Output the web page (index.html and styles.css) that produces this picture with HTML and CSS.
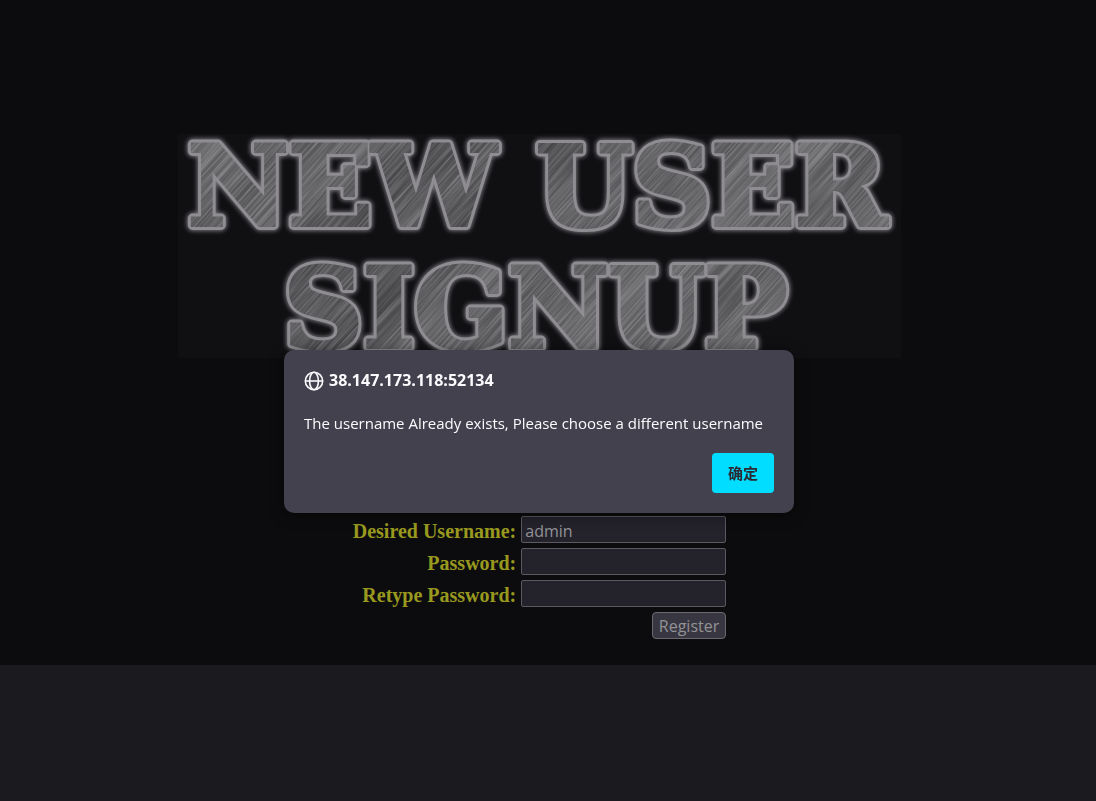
FILE: index.html
```html
<!DOCTYPE html>
<html lang="en">
<head>
<meta charset="utf-8">
<title>New User Signup</title>
<link rel="stylesheet" href="styles.css">
</head>
<body>
<main class="page">
  <h1 class="banner">
    <svg class="banner-art" viewBox="0 0 724 224" role="img" aria-label="New User Signup">
      <defs>
        <linearGradient id="steel" gradientUnits="userSpaceOnUse" x1="30" y1="0" x2="165" y2="150" spreadMethod="reflect">
          <stop offset="0" stop-color="#666568"/>
          <stop offset=".3" stop-color="#545356"/>
          <stop offset=".55" stop-color="#5f5e61"/>
          <stop offset=".8" stop-color="#454447"/>
          <stop offset="1" stop-color="#535255"/>
        </linearGradient>
        <filter id="brushed" x="0" y="0" width="100%" height="100%">
          <feTurbulence type="fractalNoise" baseFrequency="0.012 0.6" numOctaves="2" seed="4"/>
          <feColorMatrix values="0 0 0 0 .72  0 0 0 0 .72  0 0 0 0 .73  .7 0 0 0 -.25"/>
        </filter>
        <filter id="glow" x="-5%" y="-10%" width="110%" height="120%">
          <feGaussianBlur stdDeviation="2"/>
        </filter>
        <filter id="soft" x="-5%" y="-10%" width="110%" height="120%">
          <feGaussianBlur stdDeviation=".6"/>
        </filter>
        <g id="words">
          <text x="164" y="91">NEW</text>
          <text x="534" y="91">USER</text>
          <text x="358" y="213">SIGNUP</text>
        </g>
        <mask id="face" maskUnits="userSpaceOnUse" x="0" y="0" width="724" height="224">
          <use href="#words" class="letters cutout"/>
        </mask>
      </defs>
      <use href="#words" class="letters halo" filter="url(#glow)"/>
      <use href="#words" class="letters rim" filter="url(#soft)"/>
      <use href="#words" class="letters metal"/>
      <g mask="url(#face)">
        <rect x="-60" y="-300" width="860" height="860" transform="rotate(-48 362 112)" filter="url(#brushed)"/>
      </g>
    </svg>
  </h1>
  <form class="signup">
    <label for="username">Desired Username:</label>
    <input id="username" type="text" value="admin">
    <label for="password">Password:</label>
    <input id="password" type="password">
    <label for="retype">Retype Password:</label>
    <input id="retype" type="password">
    <button class="register" type="submit">Register</button>
  </form>
</main>
<dialog class="alert" open aria-labelledby="origin">
  <h2 class="origin" id="origin">
    <svg class="globe" viewBox="0 0 20 20" aria-hidden="true">
      <circle cx="10" cy="10" r="8.7"/>
      <ellipse cx="10" cy="10" rx="4.4" ry="8.7"/>
      <path d="M1.3 10H18.7"/>
    </svg>
    <span>38.147.173.118:52134</span>
  </h2>
  <p class="message">The username Already exists, Please choose a different username</p>
  <button class="confirm" type="button">确定</button>
</dialog>
</body>
</html>
```
FILE: styles.css
```css
* {
  box-sizing: border-box;
}

body {
  margin: 0;
  min-height: 100vh;
  background: #1b1a1f;
}

.page {
  display: flex;
  flex-direction: column;
  align-items: center;
  padding: 134px 17px 26px 0;
  background: #0c0c0e;
}

.banner {
  width: 67%;
  max-width: 724px;
  min-width: 320px;
  margin: 0 0 158px;
  background: #101013;
}

.banner-art {
  display: block;
  width: 100%;
}

.letters {
  font: bold 110px "DejaVu Serif", serif;
  text-anchor: middle;
}

.halo {
  fill: #77757a;
  stroke: #77757a;
  stroke-width: 12px;
  stroke-linejoin: round;
}

.rim {
  fill: #8f8d91;
  stroke: #8f8d91;
  stroke-width: 10px;
  stroke-linejoin: round;
}

.metal {
  fill: url(#steel);
  stroke: url(#steel);
  stroke-width: 4px;
}

.cutout {
  fill: #fff;
  stroke: #fff;
  stroke-width: 4px;
}

.signup {
  display: grid;
  grid-template-columns: auto 205px;
  gap: 5px;
  align-items: center;
}

.signup label {
  padding-top: 3px;
  color: #99991f;
  font: bold 20px/24px "Liberation Serif", serif;
  text-align: right;
}

.signup input,
.register {
  height: 27px;
  border: 1px solid #5b5a62;
  font: 16px/24px "Open Sans", "Noto Sans", sans-serif;
  color: #929296;
}

.signup input {
  width: 100%;
  padding: 3px 3px 0;
  border-radius: 2px;
  background: #24232c;
}

.register {
  grid-column: 2;
  justify-self: end;
  padding: 1px 6px 0;
  border-color: #69686f;
  border-radius: 4px;
  background: #383741;
}

.alert {
  position: fixed;
  top: 350px;
  left: 0;
  right: 18px;
  display: flex;
  flex-direction: column;
  width: 510px;
  max-width: 95%;
  margin: 0 auto;
  padding: 20px;
  border: 0;
  border-radius: 10px;
  background: #42414d;
  color: #fbfbfe;
  font: 15px/22px "Open Sans", "Noto Sans", sans-serif;
  box-shadow: 0 2px 14px rgba(0, 0, 0, .5);
}

.origin {
  display: flex;
  align-items: center;
  gap: 5px;
  margin: 0 0 21px;
  font-size: 16px;
  line-height: 21px;
  font-weight: bold;
}

.globe {
  width: 20px;
  height: 20px;
  fill: none;
  stroke: #fbfbfe;
  stroke-width: 1.6px;
}

.message {
  margin: 0 0 19px;
}

.confirm {
  align-self: flex-end;
  height: 40px;
  padding: 0 16px;
  border: 0;
  border-radius: 4px;
  background: #00ddff;
  color: #2b2a33;
  font: bold 15px/20px "Noto Sans CJK SC", sans-serif;
}
```
